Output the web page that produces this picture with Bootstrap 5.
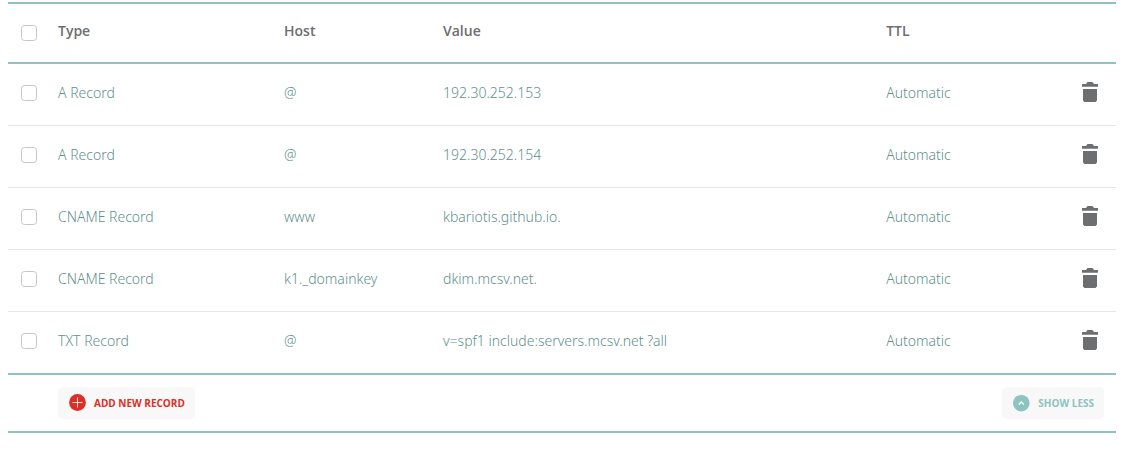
<!DOCTYPE html>
<html lang="en">
<head>
<meta charset="utf-8">
<meta name="viewport" content="width=device-width, initial-scale=1">
<title>Host records</title>
<link href="https://cdn.jsdelivr.net/npm/bootstrap@5.3.0/dist/css/bootstrap.min.css" rel="stylesheet">
<style>
  :root { --teal: #8dc3c1; --record: #5f918d; --ink: #6d6e70; --danger: #db3027; }
  body { font-family: "Noto Sans", "Open Sans", sans-serif; font-size: 14px; line-height: 20px; }
  main { padding: 2px 15px 22px 8px; }
  .records { table-layout: fixed; border-collapse: separate; border-spacing: 0; color: var(--record); border-top: 2px solid var(--teal); }
  .records > :not(caption) > * > * { padding: 0; border: 0; color: inherit; background: transparent; box-shadow: none; vertical-align: middle; }
  .records > thead > tr > th { height: 60px; padding-bottom: 4px; border-bottom: 2px solid var(--teal); color: var(--ink); font-family: "Open Sans", sans-serif; font-weight: 600; }
  .records > thead > tr > th:first-child { padding-bottom: 0; }
  .records > tbody > tr > td { height: 62px; padding-bottom: 4px; border-bottom: 1px solid #e6e6e6; font-weight: 350; }
  .records > tbody > tr > td:last-child { padding-bottom: 6px; }
  .records > tbody > tr:last-child > td { height: 63px; border-bottom: 2px solid var(--teal); }
  .col-check { width: 50px; }
  .col-type { width: 20.4%; }
  .col-host { width: 14.35%; }
  .col-value { width: 40%; }
  .form-check-input { width: 16px; height: 16px; border: 1px solid #c6c6c6; border-radius: 4px; margin: 0 0 0 13px; }
  .trash { margin-right: 18px; color: var(--ink); }
  .actions { height: 58px; padding: 0 12px 0 50px; border-bottom: 2px solid var(--teal); }
  .pill { --bs-btn-bg: #f8f8f8; --bs-btn-hover-bg: #f0f0f0; --bs-btn-border-width: 0; height: 32px; padding: 0 10px; border-radius: 5px; font-family: "Open Sans", sans-serif; font-size: 10px; line-height: 16px; font-weight: 700; gap: 8px; }
  .pill-add { --bs-btn-color: var(--danger); --bs-btn-hover-color: var(--danger); }
  .pill-less { --bs-btn-color: var(--teal); --bs-btn-hover-color: var(--teal); }
</style>
</head>
<body>
<svg class="d-none" aria-hidden="true">
  <symbol id="trash" viewBox="0 0 16 20"><path fill="currentColor" d="M4 2 5.500 0h5L12 2h4v2.700H0V2zM1 7h14v11.500L13.500 20h-11L1 18.500z"/></symbol>
</svg>
<main>
  <table class="table records mb-0">
    <colgroup><col class="col-check"><col class="col-type"><col class="col-host"><col class="col-value"><col><col class="col-check"></colgroup>
    <thead>
      <tr>
        <th><input class="form-check-input d-block" type="checkbox" aria-label="Select all records"></th>
        <th scope="col">Type</th>
        <th scope="col">Host</th>
        <th scope="col">Value</th>
        <th scope="col">TTL</th>
        <th></th>
      </tr>
    </thead>
    <tbody>
      <tr>
        <td><input class="form-check-input d-block" type="checkbox" aria-label="Select A record 192.30.252.153"></td>
        <td>A Record</td><td>@</td><td>192.30.252.153</td><td>Automatic</td>
        <td><button type="button" class="btn border-0 p-0 d-flex ms-auto trash" aria-label="Delete"><svg width="16" height="20"><use href="#trash"/></svg></button></td>
      </tr>
      <tr>
        <td><input class="form-check-input d-block" type="checkbox" aria-label="Select A record 192.30.252.154"></td>
        <td>A Record</td><td>@</td><td>192.30.252.154</td><td>Automatic</td>
        <td><button type="button" class="btn border-0 p-0 d-flex ms-auto trash" aria-label="Delete"><svg width="16" height="20"><use href="#trash"/></svg></button></td>
      </tr>
      <tr>
        <td><input class="form-check-input d-block" type="checkbox" aria-label="Select CNAME record www"></td>
        <td>CNAME Record</td><td>www</td><td>kbariotis.github.io.</td><td>Automatic</td>
        <td><button type="button" class="btn border-0 p-0 d-flex ms-auto trash" aria-label="Delete"><svg width="16" height="20"><use href="#trash"/></svg></button></td>
      </tr>
      <tr>
        <td><input class="form-check-input d-block" type="checkbox" aria-label="Select CNAME record k1._domainkey"></td>
        <td>CNAME Record</td><td>k1._domainkey</td><td>dkim.mcsv.net.</td><td>Automatic</td>
        <td><button type="button" class="btn border-0 p-0 d-flex ms-auto trash" aria-label="Delete"><svg width="16" height="20"><use href="#trash"/></svg></button></td>
      </tr>
      <tr>
        <td><input class="form-check-input d-block" type="checkbox" aria-label="Select TXT record"></td>
        <td>TXT Record</td><td>@</td><td>v=spf1 include:servers.mcsv.net ?all</td><td>Automatic</td>
        <td><button type="button" class="btn border-0 p-0 d-flex ms-auto trash" aria-label="Delete"><svg width="16" height="20"><use href="#trash"/></svg></button></td>
      </tr>
    </tbody>
  </table>
  <div class="actions d-flex align-items-center justify-content-between">
    <button type="button" class="btn pill pill-add d-flex align-items-center">
      <svg width="18" height="18" viewBox="0 0 18 18" aria-hidden="true"><circle cx="9.500" cy="8.500" r="8.400" fill="currentColor"/><path d="M9.500 3.500v10M4.500 8.500h10" stroke="#fff" stroke-opacity=".85" stroke-width="1"/></svg>
      ADD NEW RECORD
    </button>
    <button type="button" class="btn pill pill-less d-flex align-items-center">
      <svg width="18" height="18" viewBox="0 0 18 18" aria-hidden="true"><circle cx="9.300" cy="9.200" r="8.300" fill="currentColor"/><path d="M6.800 10.500 9.300 8l2.500 2.500" fill="none" stroke="#fff" stroke-width="1.400"/></svg>
      SHOW LESS
    </button>
  </div>
</main>
<script src="https://cdn.jsdelivr.net/npm/bootstrap@5.3.0/dist/js/bootstrap.bundle.min.js"></script>
</body>
</html>
